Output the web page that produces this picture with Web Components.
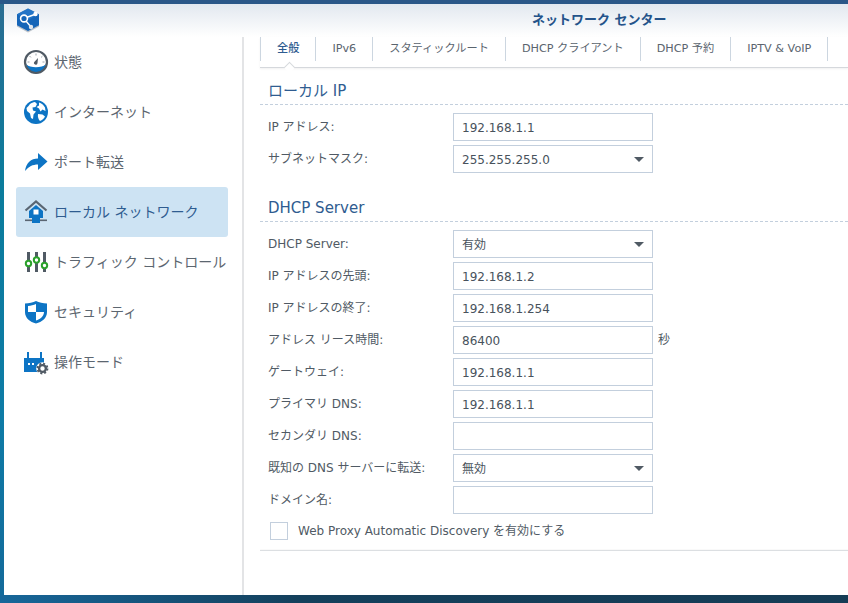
<!DOCTYPE html>
<html lang="ja">
<head>
<meta charset="utf-8">
<title>ネットワーク センター</title>
<style>
  html, body { margin: 0; height: 100%; overflow: hidden; }
  body {
    font-family: "DejaVu Sans", "Noto Sans CJK JP", sans-serif;
    font-size: 12px;
    line-height: 16px;
    color: #505a64;
  }
</style>
</head>
<body>
<dsm-desktop>
  <app-window title-text="ネットワーク センター">
    <svg slot="logo" width="24" height="25" viewBox="0 0 24 25">
      <path d="M12 .5 23 6.500v12L12 24.500 1 18.500v-12z" fill="#b9c0c8"/>
      <path d="M12 .5 23 6.200v11L12 23 1 17.200v-11z" fill="#1565b8"/>
      <path d="M12 .5 23 6.200 12 12 1 6.200z" fill="#2c7fd0" opacity=".6"/>
      <path d="M9 10 20 6M10 13l5 6" stroke="#fff" stroke-width="1.400" fill="none"/>
      <circle cx="8" cy="10.500" r="3.400" fill="#1565b8" stroke="#fff" stroke-width="1.600"/>
      <circle cx="19.500" cy="6" r="2.200" fill="#fff"/>
      <circle cx="15" cy="19" r="2.200" fill="#dfe6ee"/>
    </svg>
    <side-nav slot="nav">
      <nav-item label="状態">
        <svg slot="icon" width="26" height="26" viewBox="0 0 26 26">
          <path d="M3 14.500a10 10 0 0 0 20 0c-2 4-6 5-10 5s-8-1-10-5z" fill="#0d74c4"/>
          <path d="M3.500 15.500a9.800 9.800 0 0 0 19 0c-3 3.500-16 3.500-19 0z" fill="#0d74c4"/>
          <circle cx="13" cy="13" r="11" fill="none" stroke="#505a64" stroke-width="2.200"/>
          <path d="M13 4.500v2M6.500 7l1.400 1.400M19.500 7l-1.400 1.400M4.500 13h2M21.500 13h-2" stroke="#9aa3ac" stroke-width="1"/>
          <path d="M15 9 14.500 14a1.700 1.700 0 1 1-3-1.200z" fill="#505a64"/>
        </svg>
      </nav-item>
      <nav-item label="インターネット">
        <svg slot="icon" width="26" height="26" viewBox="0 0 26 26">
          <circle cx="13" cy="13" r="12" fill="#0d74c4"/>
          <path d="M7 5c1.500-1 3-1.700 5-2l2 2-1.500 3-3 .5.500 3 3 1-2.500 3-.5 4.500-2-1-1-4.500-3-2.500-.500-3 2-2z" fill="#fff"/>
          <path d="M16 3.500c2.500.7 4.500 2.500 6 5l.5 3.500-3-1.500-2 2-1.500-3-2.500-1.500 2.500-1.500z" fill="#fff"/>
          <path d="M15 15l4.500.5 2.500 2c-1 2-3 4-5 4.500-1.500-1.500-2.500-4-2-7z" fill="#fff"/>
        </svg>
      </nav-item>
      <nav-item label="ポート転送">
        <svg slot="icon" width="26" height="26" viewBox="0 0 26 26">
          <path d="M2 22C3 14 8 9.500 15 9.500V4l9.500 8.500L15 21v-5.500C9.500 15.500 6 17.500 2 22z" fill="#0d74c4"/>
        </svg>
      </nav-item>
      <nav-item label="ローカル ネットワーク" active>
        <svg slot="icon" width="26" height="26" viewBox="0 0 26 26">
          <path d="M2.500 11.500 13 2.500l10.500 9" fill="none" stroke="#5a6672" stroke-width="2.200"/>
          <path d="M6 12 13 6l7 6v7H6z" fill="#0d74c4"/>
          <rect x="10.500" y="10.500" width="5" height="5" fill="#fff"/>
          <rect x="2" y="20.500" width="22" height="1.600" fill="#5a6672"/>
          <rect x="9" y="19" width="8" height="5" fill="#0d74c4"/>
        </svg>
      </nav-item>
      <nav-item label="トラフィック コントロール">
        <svg slot="icon" width="26" height="26" viewBox="0 0 26 26">
          <path d="M4 3v20h3V3zM12 3v20h3V3zM20 3v20h3V3z" fill="#505a64"/>
          <circle cx="5.500" cy="14.500" r="2.700" fill="#fff" stroke="#2ba02b" stroke-width="2"/>
          <circle cx="13.500" cy="11" r="2.700" fill="#fff" stroke="#2ba02b" stroke-width="2"/>
          <circle cx="21.500" cy="16.500" r="2.700" fill="#fff" stroke="#2ba02b" stroke-width="2"/>
        </svg>
      </nav-item>
      <nav-item label="セキュリティ">
        <svg slot="icon" width="26" height="26" viewBox="0 0 26 26">
          <path d="M2 4.500C6 4.500 10 3.500 13 2c3 1.500 7 2.500 11 2.500V13c0 6-5 10-11 11.500C7 23 2 19 2 13z" fill="#0d74c4"/>
          <path d="M13 5c-2.500 1-5 1.700-8 2v6h8zM13 13v8.500c4-1.200 8-4 8-8.500z" fill="#fff"/>
        </svg>
      </nav-item>
      <nav-item label="操作モード">
        <svg slot="icon" width="26" height="26" viewBox="0 0 26 26">
          <path d="M1 9h3V3h2v6h11V3h2v6h2v14H1z" fill="#0d74c4"/>
          <path d="M5 14h2v2H5zM9 14h2v2H9z" fill="#fff"/>
          <circle cx="19.500" cy="19.500" r="6.300" fill="#fff"/>
          <circle cx="19.500" cy="19.500" r="3.400" fill="none" stroke="#505a64" stroke-width="2.400"/>
          <circle cx="19.500" cy="19.500" r="5" fill="none" stroke="#505a64" stroke-width="1.800" stroke-dasharray="2 1.930"/>
        </svg>
      </nav-item>
    </side-nav>

    <tab-bar>
      <tab-item active>全般</tab-item>
      <tab-item>IPv6</tab-item>
      <tab-item>スタティックルート</tab-item>
      <tab-item>DHCP クライアント</tab-item>
      <tab-item>DHCP 予約</tab-item>
      <tab-item>IPTV &amp; VoIP</tab-item>
    </tab-bar>

    <form-section heading="ローカル IP" class="first">
      <form-row label="IP アドレス:"><text-field>192.168.1.1</text-field></form-row>
      <form-row label="サブネットマスク:"><select-field>255.255.255.0</select-field></form-row>
    </form-section>

    <form-section heading="DHCP Server">
      <form-row label="DHCP Server:"><select-field>有効</select-field></form-row>
      <form-row label="IP アドレスの先頭:"><text-field>192.168.1.2</text-field></form-row>
      <form-row label="IP アドレスの終了:"><text-field>192.168.1.254</text-field></form-row>
      <form-row label="アドレス リース時間:" suffix="秒"><text-field>86400</text-field></form-row>
      <form-row label="ゲートウェイ:"><text-field>192.168.1.1</text-field></form-row>
      <form-row label="プライマリ DNS:"><text-field>192.168.1.1</text-field></form-row>
      <form-row label="セカンダリ DNS:"><text-field></text-field></form-row>
      <form-row label="既知の DNS サーバーに転送:"><select-field>無効</select-field></form-row>
      <form-row label="ドメイン名:"><text-field></text-field></form-row>
      <check-row>Web Proxy Automatic Discovery を有効にする</check-row>
    </form-section>
    <hr-line></hr-line>
  </app-window>
</dsm-desktop>

<script>
function define(name, css, html) {
  customElements.define(name, class extends HTMLElement {
    constructor() {
      super();
      this.attachShadow({mode: 'open'});
      this.shadowRoot.innerHTML = `<style>${css}</style>${html(this)}`;
    }
  });
}

define('dsm-desktop', `
  :host {
    display: block;
    height: 603px;
    box-sizing: border-box;
    padding: 4px 0 8px 4px;
    background:
      linear-gradient(#2a5788 0 4px, transparent 4px),
      linear-gradient(90deg, #17679a 0, #14405c 35%, #153c55 100%);
  }
  :host::before {
    content: '';
    position: absolute;
    left: 0; top: 4px;
    width: 4px; height: 591px;
    background: linear-gradient(#2b6d92, #0b7c9c 30%, #0e7ba6 70%, #146a9a);
  }
`, () => `<slot></slot>`);

define('app-window', `
  :host { display: flex; flex-direction: column; height: 591px; background: #fff; }
  header {
    flex: 0 0 33px;
    display: flex;
    align-items: center;
    padding-left: 12px;
    background: linear-gradient(#e2e8ef, #fff);
  }
  h1 {
    margin: 0 0 1px 492px;
    font-size: 13px;
    line-height: 16px;
    font-weight: 700;
    color: #24538a;
    white-space: nowrap;
  }
  .logo { width: 24px; height: 25px; }
  .body { flex: 1; display: flex; min-height: 0; }
  .nav { flex: 0 0 240px; box-sizing: border-box; border-right: 2px solid #e3e4e6; }
  main { flex: 1; min-width: 0; padding-left: 16px; }
`, el => `
  <header>
    <div class="logo"><slot name="logo"></slot></div>
    <h1>${el.getAttribute('title-text')}</h1>
  </header>
  <div class="body">
    <div class="nav"><slot name="nav"></slot></div>
    <main><slot></slot></main>
  </div>
`);

define('side-nav', `
  :host { display: flex; flex-direction: column; padding-left: 12px; width: 212px; }
`, () => `<slot></slot>`);

define('nav-item', `
  :host {
    display: flex;
    align-items: center;
    height: 50px;
    width: 212px;
    box-sizing: border-box;
    padding-left: 7px;
    border-radius: 3px;
    font-size: 14px;
    line-height: 18px;
    color: #5c6670;
    white-space: nowrap;
  }
  :host([active]) { background: #cde3f3; color: #2f5c90; }
  .icon { width: 26px; height: 26px; margin-right: 5px; flex: none; }
  span { margin-bottom: 1px; }
`, el => `
  <div class="icon"><slot name="icon"></slot></div>
  <span>${el.getAttribute('label')}</span>
`);

define('tab-bar', `
  :host {
    display: flex;
    height: 31px;
    box-sizing: border-box;
    border-bottom: 1px solid #d5d8dc;
    box-shadow: 0 1px 2px rgba(0,0,0,.06);
  }
`, () => `<slot></slot>`);

define('tab-item', `
  :host {
    display: flex;
    align-items: center;
    position: relative;
    height: 24px;
    padding: 0 16px;
    border-right: 1px solid #ccd6e0;
    font-size: 11.2px;
    color: #5a646e;
    white-space: nowrap;
  }
  :host([active]) {
    border-left: 1px solid #ccd6e0;
    color: #2f5c90;
    font-weight: 500;
  }
  :host([active])::after {
    content: '';
    position: absolute;
    left: 24px;
    top: 26px;
    width: 8px; height: 8px;
    background: #fff;
    border-top: 1px solid #d5d8dc;
    border-left: 1px solid #d5d8dc;
    transform: rotate(45deg) scale(.9);
  }
`, () => `<slot></slot>`);

define('form-section', `
  :host { display: block; margin-top: 22px; }
  :host(.first) { margin-top: 10px; }
  h2 {
    margin: 0 0 8px;
    height: 26px;
    box-sizing: content-box;
    padding-left: 8px;
    font-size: 15px;
    line-height: 26px;
    font-weight: 400;
    color: #2f5c90;
    border-bottom: 1px dashed #c3cfdd;
  }
  .rows { display: flex; flex-direction: column; gap: 4px; }
`, el => `
  <h2>${el.getAttribute('heading')}</h2>
  <div class="rows"><slot></slot></div>
`);

define('form-row', `
  :host { display: flex; align-items: center; height: 28px; padding-left: 8px; white-space: nowrap; }
  label { flex: 0 0 185px; }
  .suffix { margin-left: 5px; }
`, el => `
  <label>${el.getAttribute('label')}</label>
  <slot></slot>
  ${el.hasAttribute('suffix') ? `<span class="suffix">${el.getAttribute('suffix')}</span>` : ''}
`);

const fieldCss = `
  :host {
    display: flex;
    align-items: center;
    position: relative;
    width: 200px;
    height: 28px;
    box-sizing: border-box;
    padding: 1px 0 0 8px;
    border: 1px solid #c3cfdd;
    background: #fff;
    color: #48525c;
  }
`;

define('text-field', fieldCss, () => `<slot></slot>`);

define('select-field', fieldCss + `
  .caret {
    position: absolute;
    right: 8px;
    top: 11px;
    border-style: solid;
    border-width: 5px 5px 0;
    border-color: #505a64 transparent transparent;
  }
`, () => `<slot></slot><span class="caret"></span>`);

define('check-row', `
  :host {
    display: flex;
    align-items: center;
    height: 18px;
    margin-top: 4px;
    padding-left: 10px;
    white-space: nowrap;
  }
  .box {
    flex: none;
    width: 18px; height: 18px;
    box-sizing: border-box;
    border: 1px solid #c3cfdd;
    margin-right: 10px;
  }
`, () => `<span class="box"></span><slot></slot>`);

define('hr-line', `
  :host {
    display: block;
    margin-top: 10px;
    height: 1px;
    background: #dcdfe2;
    box-shadow: 0 -1px 1px rgba(0,0,0,.03);
  }
`, () => ``);
</script>
</body>
</html>
